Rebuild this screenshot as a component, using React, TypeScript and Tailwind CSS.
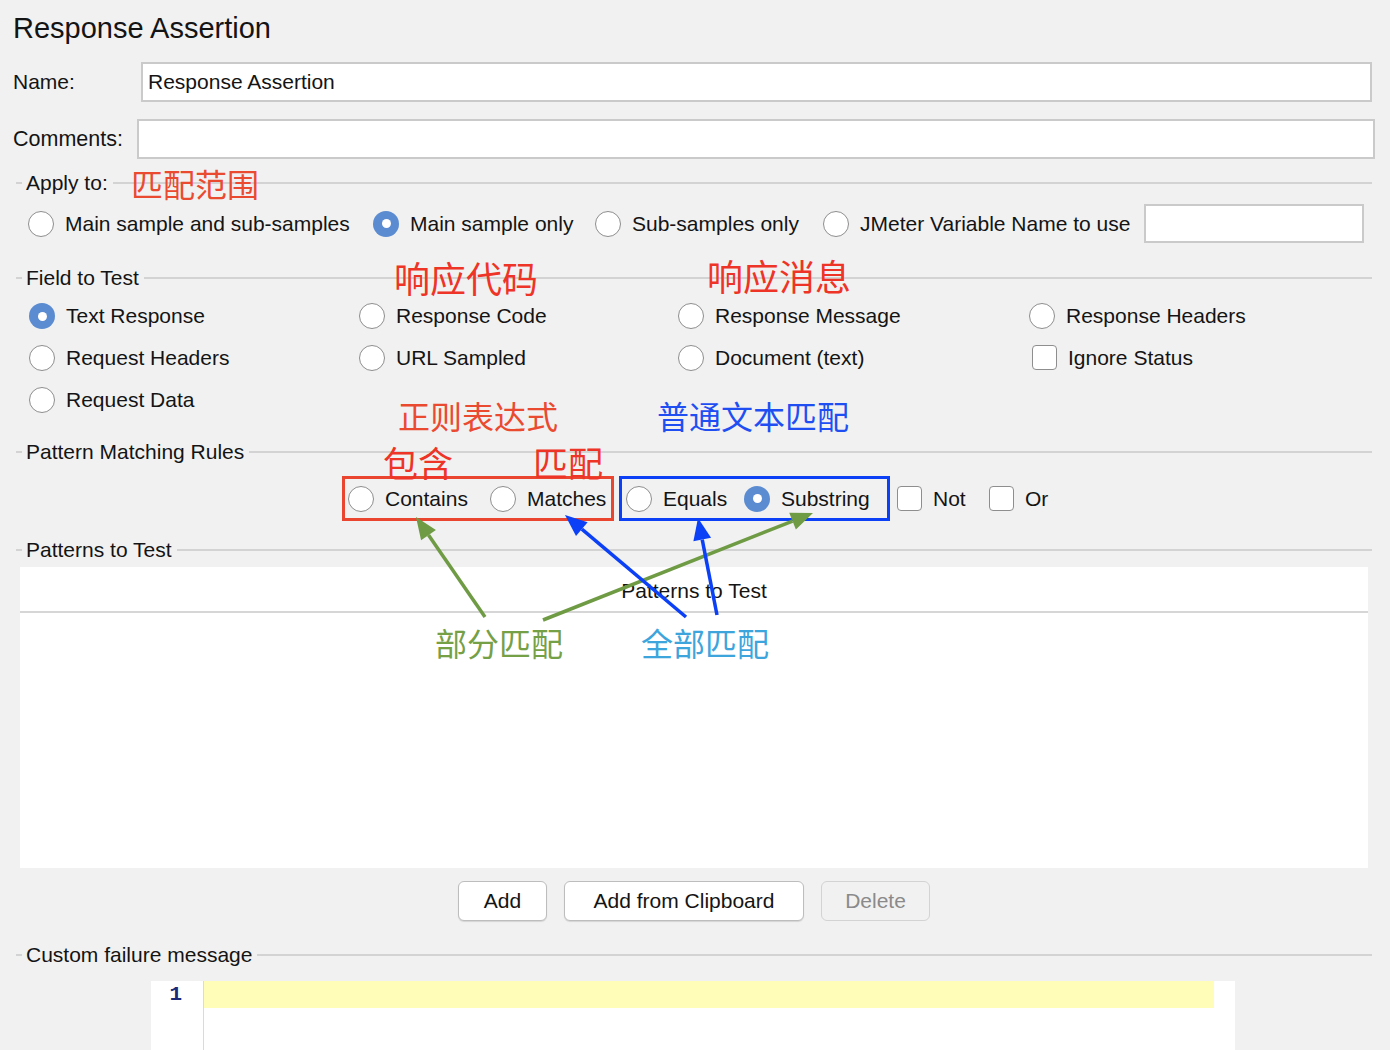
import React from "react";

const Radio: React.FC<{ checked?: boolean }> = ({ checked }) =>
  checked ? (
    <span className="flex h-[26px] w-[26px] shrink-0 items-center justify-center rounded-full bg-[#5b8bd0]">
      <span className="h-[9px] w-[9px] rounded-full bg-white" />
    </span>
  ) : (
    <span className="h-[26px] w-[26px] shrink-0 rounded-full border-[1.5px] border-[#8e8e8e] bg-white" />
  );

const Check: React.FC = () => (
  <span className="h-[25px] w-[25px] shrink-0 rounded-[4px] border-[1.5px] border-[#8e8e8e] bg-white" />
);

const Option: React.FC<{ label: string; checked?: boolean; box?: boolean; className?: string }> = ({
  label,
  checked,
  box,
  className = "",
}) => (
  <label className={`flex items-center gap-[11px] ${className}`}>
    {box ? <Check /> : <Radio checked={checked} />}
    <span className="whitespace-nowrap text-[21px] leading-[24px]">{label}</span>
  </label>
);

const GroupHeader: React.FC<{ title: string; className?: string }> = ({ title, className = "" }) => (
  <div className={`flex h-[34px] items-center pl-[16px] pr-[18px] ${className}`}>
    <div className="h-[2px] w-[6px] bg-[#d3d3d3]" />
    <span className="pl-[4px] pr-[5px] text-[21px] leading-[24px]">{title}</span>
    <div className="h-[2px] flex-1 bg-[#d3d3d3]" />
  </div>
);

const notes = [
  { text: "匹配范围", cls: "left-[131px] top-[167px] text-[32px] text-[#ea4a30]" },
  { text: "响应代码", cls: "left-[394px] top-[259px] text-[36px] text-[#ee3427]" },
  { text: "响应消息", cls: "left-[707px] top-[257px] text-[36px] text-[#ee3427]" },
  { text: "正则表达式", cls: "left-[398px] top-[399px] text-[32px] text-[#ea4a30]" },
  { text: "普通文本匹配", cls: "left-[657px] top-[399px] text-[32px] text-[#1f4ff2]" },
  { text: "包含", cls: "left-[383px] top-[444px] text-[35px] text-[#ee3427]" },
  { text: "匹配", cls: "left-[533px] top-[444px] text-[35px] text-[#ee3427]" },
  { text: "部分匹配", cls: "left-[435px] top-[626px] text-[32px] text-[#76a046]" },
  { text: "全部匹配", cls: "left-[641px] top-[626px] text-[32px] text-[#3ea5dc]" },
];

// tail -> tip
const arrows = [
  { x1: 485, y1: 617, x2: 416, y2: 517, color: "#6f9b45" },
  { x1: 543, y1: 620, x2: 813, y2: 513, color: "#6f9b45" },
  { x1: 686, y1: 617, x2: 565, y2: 515, color: "#0b40f6" },
  { x1: 717, y1: 615, x2: 698, y2: 518, color: "#0b40f6" },
];

function head(x1: number, y1: number, x2: number, y2: number, len = 22, w = 9) {
  const d = Math.hypot(x2 - x1, y2 - y1);
  const ux = (x2 - x1) / d;
  const uy = (y2 - y1) / d;
  const bx = x2 - ux * len;
  const by = y2 - uy * len;
  return {
    bx,
    by,
    pts: `${x2},${y2} ${bx - uy * w},${by + ux * w} ${bx + uy * w},${by - ux * w}`,
  };
}

const App: React.FC = () => {
  return (
    <div className="relative h-[1050px] w-[1390px] overflow-hidden bg-[#f1f1f1] font-['Liberation_Sans',Arial,sans-serif] text-[#141414]">
      <h1 className="pl-[13px] pt-[11px] text-[29px] font-normal leading-[34px]">Response Assertion</h1>

      <div className="mt-[17px] flex h-[40px] items-center">
        <span className="w-[141px] shrink-0 pl-[13px] text-[21px] leading-[24px]">Name:</span>
        <input
          className="mr-[18px] h-[40px] flex-1 border-2 border-[#cacaca] bg-white pl-[5px] text-[21px] outline-none"
          defaultValue="Response Assertion"
        />
      </div>

      <div className="mt-[17px] flex h-[40px] items-center">
        <span className="w-[137px] shrink-0 pl-[13px] text-[21.5px] leading-[24px]">Comments:</span>
        <input className="mr-[15px] h-[40px] flex-1 border-2 border-[#cacaca] bg-white outline-none" />
      </div>

      <GroupHeader title="Apply to:" className="mt-[7px]" />
      <div className="mt-[4px] flex h-[39px] items-center pl-[28px]">
        <Option label="Main sample and sub-samples" className="w-[345px]" />
        <Option label="Main sample only" checked className="w-[222px]" />
        <Option label="Sub-samples only" className="w-[228px]" />
        <Option label="JMeter Variable Name to use" className="w-[321px]" />
        <input className="h-[39px] w-[220px] border-2 border-[#cacaca] bg-white outline-none" />
      </div>

      <GroupHeader title="Field to Test" className="mt-[18px]" />
      <div className="grid grid-cols-[330px_319px_351px_1fr] grid-rows-[42px_41px_44px] items-center pl-[29px]">
        <Option label="Text Response" checked />
        <Option label="Response Code" />
        <Option label="Response Message" />
        <Option label="Response Headers" />
        <Option label="Request Headers" />
        <Option label="URL Sampled" />
        <Option label="Document (text)" />
        <Option label="Ignore Status" box className="ml-[3px]" />
        <Option label="Request Data" />
      </div>

      <GroupHeader title="Pattern Matching Rules" className="mt-[13px]" />
      <div className="mt-[7px] flex h-[45px] items-center pl-[342px]">
        <div className="flex h-[45px] w-[272px] items-center border-[3px] border-[#e9452f] pl-[3px]">
          <Option label="Contains" className="w-[142px]" />
          <Option label="Matches" />
        </div>
        <div className="ml-[5px] flex h-[45px] w-[271px] items-center border-[3px] border-[#0b40f6] pl-[4px]">
          <Option label="Equals" className="w-[118px]" />
          <Option label="Substring" checked />
        </div>
        <Option label="Not" box className="ml-[7px] w-[92px]" />
        <Option label="Or" box />
      </div>

      <GroupHeader title="Patterns to Test" className="mt-[12px]" />
      <div className="ml-[20px] mr-[22px] h-[301px] bg-white">
        <div className="flex h-[46px] items-center justify-center border-b-2 border-[#d6d6d6] pt-[4px] text-[21px] leading-[24px]">
          Patterns to Test
        </div>
      </div>

      <div className="ml-[20px] mr-[22px] mt-[13px] flex h-[40px] justify-center gap-[17px]">
        <button className="h-[40px] w-[89px] rounded-[6px] border border-[#bdbdbd] bg-white text-[21px] shadow-[0_1px_1px_rgba(0,0,0,0.12)]">
          Add
        </button>
        <button className="h-[40px] w-[240px] rounded-[6px] border border-[#bdbdbd] bg-white text-[21px] shadow-[0_1px_1px_rgba(0,0,0,0.12)]">
          Add from Clipboard
        </button>
        <button className="h-[40px] w-[109px] rounded-[6px] border border-[#d3d3d3] bg-[#f1f1f1] text-[21px] text-[#8a8a8a]" disabled>
          Delete
        </button>
      </div>

      <GroupHeader title="Custom failure message" className="mt-[17px]" />
      <div className="ml-[151px] mt-[9px] flex h-[80px] w-[1084px] bg-white">
        <div className="w-[53px] shrink-0 border-r border-[#dadada] pr-[21px] text-right font-['Liberation_Mono',monospace] text-[21px] font-bold leading-[27px] text-[#1c2a78]">
          1
        </div>
        <div className="flex-1 pr-[21px]">
          <div className="h-[27px] bg-[#fffdb8]" />
        </div>
      </div>

      {notes.map(n => (
        <span
          key={n.text + n.cls}
          className={`pointer-events-none absolute whitespace-nowrap font-['Noto_Sans_CJK_SC',sans-serif] leading-none ${n.cls}`}
        >
          {n.text}
        </span>
      ))}

      <svg className="pointer-events-none absolute left-0 top-0" width="1390" height="1050">
        {arrows.map((a, i) => {
          const h = head(a.x1, a.y1, a.x2, a.y2);
          return (
            <g key={i}>
              <line x1={a.x1} y1={a.y1} x2={h.bx} y2={h.by} stroke={a.color} strokeWidth="3.5" />
              <polygon points={h.pts} fill={a.color} />
            </g>
          );
        })}
      </svg>
    </div>
  );
};

export default App;
